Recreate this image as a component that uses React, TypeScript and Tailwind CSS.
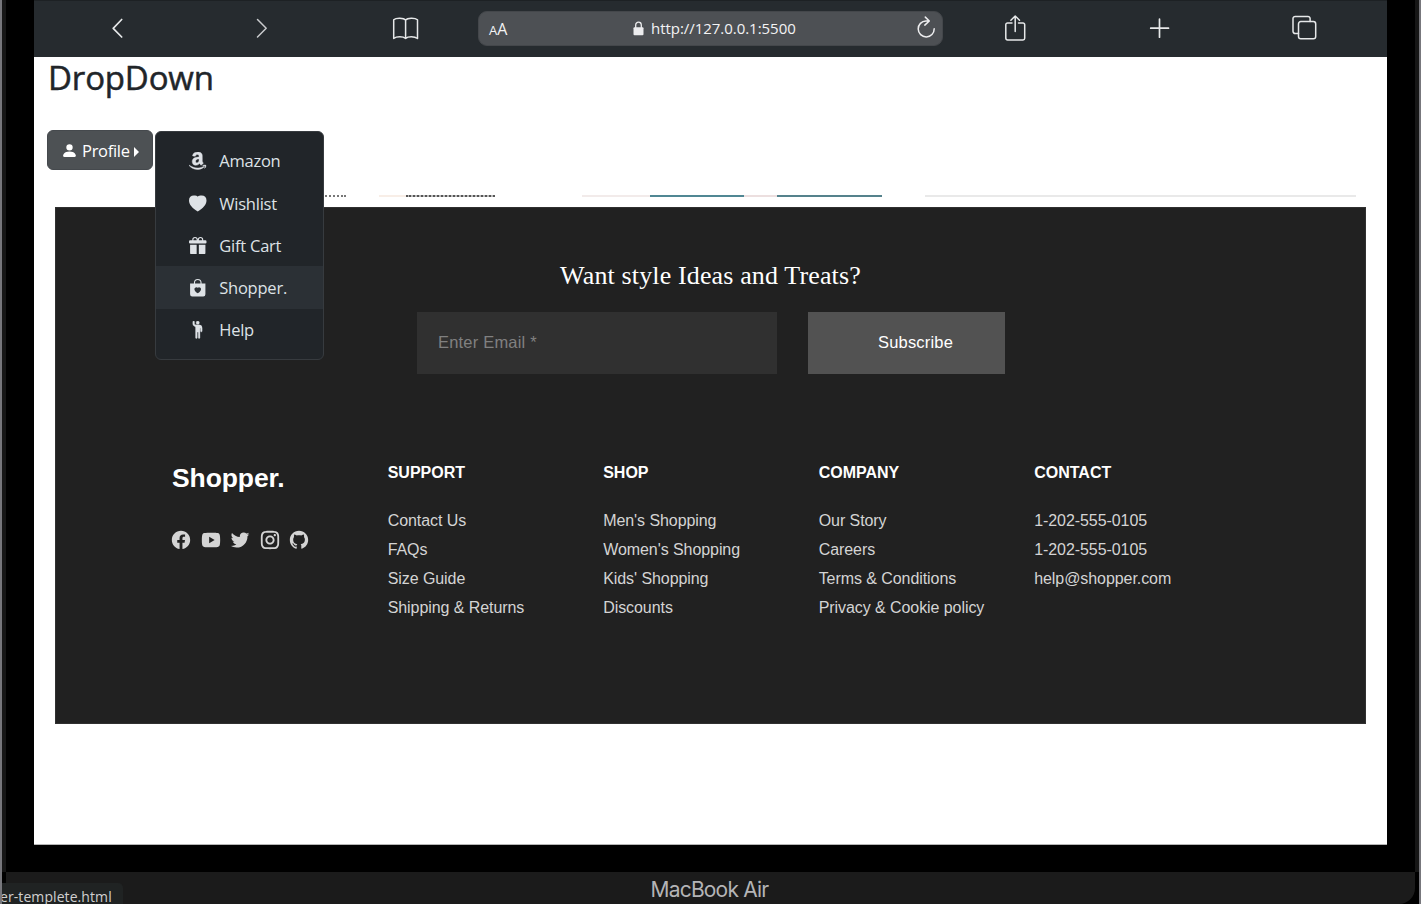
import React from "react";
import {
  BsPersonFill,
  BsAmazon,
  BsGiftFill,
  BsBagHeartFill,
  BsPersonRaisedHand,
} from "react-icons/bs";
import {
  RiFacebookCircleFill,
  RiYoutubeFill,
  RiTwitterFill,
  RiInstagramLine,
  RiGithubFill,
} from "react-icons/ri";

function Heart({ className }: { className?: string }) {
  return (
    <svg viewBox="0 0 18 18" className={className} fill="currentColor">
      <path d="M9 17C3.500 13.400 0 10.200 0 5.700C0 2.400 2 .6 5 .6C6.900 .6 8.300 1 9 1.700C9.700 1 11.100 .6 13 .6C16 .6 18 2.400 18 5.700C18 10.200 14.500 13.400 9 17Z" />
    </svg>
  );
}

const menu = [
  { label: "Amazon", Icon: BsAmazon, iconClass: "stroke-current [stroke-width:0.4px]" },
  { label: "Wishlist", Icon: Heart, iconClass: "" },
  { label: "Gift Cart", Icon: BsGiftFill, iconClass: "" },
  { label: "Shopper.", Icon: BsBagHeartFill, iconClass: "", active: true },
  { label: "Help", Icon: BsPersonRaisedHand, iconClass: "stroke-current [stroke-width:0.3px]" },
];

const columns = [
  { title: "SUPPORT", items: ["Contact Us", "FAQs", "Size Guide", "Shipping & Returns"] },
  { title: "SHOP", items: ["Men's Shopping", "Women's Shopping", "Kids' Shopping", "Discounts"] },
  { title: "COMPANY", items: ["Our Story", "Careers", "Terms & Conditions", "Privacy & Cookie policy"] },
  { title: "CONTACT", items: ["1-202-555-0105", "1-202-555-0105", "help@shopper.com"] },
];

const socials = [RiFacebookCircleFill, RiYoutubeFill, RiTwitterFill, RiInstagramLine, RiGithubFill];

function Glyph({ children }: { children: React.ReactNode }) {
  return (
    <svg width="28" height="28" viewBox="0 0 28 28" fill="none" stroke="#e6e8e9" strokeWidth="1.5" strokeLinecap="round" strokeLinejoin="round">
      {children}
    </svg>
  );
}

function Toolbar() {
  return (
    <header className="flex h-[57px] shrink-0 items-center border-t border-[#1d2124] bg-[#262b2f] pb-[2px] pl-[69px]">
      <div className="flex w-[144px]">
        <Glyph><path d="M18.700 5.500 10.200 14.300l8.500 8.700" strokeWidth="1.7" /></Glyph>
      </div>
      <div className="flex w-[144px]">
        <Glyph><path d="M10.500 5.500 19.200 14.300 10.500 23" stroke="#c9cbcd" /></Glyph>
      </div>
      <div className="flex w-[87px]">
        <Glyph>
          <path d="M14.600 6C12.600 3.800 5 3.700 2.700 5.800V24.500C5.500 22.300 12 22.300 14.600 24.500C17 22.300 23.500 22.300 26.500 24.500V5.800C24 3.700 16.500 3.800 14.600 6ZM14.600 6V24.500" />
        </Glyph>
      </div>
      <div className="flex h-[35px] w-[465px] items-center rounded-[9px] border border-[#44474b] bg-[#4d5054] pl-[10px] pr-[6px] font-['Open_Sans',sans-serif] text-[#f3f3f4]">
        <div className="flex w-[144px] items-baseline pt-[2px] leading-none">
          <span className="text-[13px]">A</span>
          <span className="text-[16px]">A</span>
        </div>
        <svg width="11" height="15" viewBox="0 0 11 15" className="shrink-0">
          <path d="M2.700 7V4a2.800 2.800 0 0 1 5.600 0v3" fill="none" stroke="#ececee" strokeWidth="1.300" />
          <rect x="0.500" y="6.200" width="10" height="8" rx="1" fill="#ececee" />
        </svg>
        <span className="ml-[7px] whitespace-nowrap text-[15px] tracking-[-0.040px]">http://127.0.0.1:5500</span>
        <svg width="20" height="24" viewBox="0 0 20 24" className="ml-auto" fill="none" stroke="#eeeef0" strokeWidth="1.500" strokeLinecap="round" strokeLinejoin="round">
          <path d="M12.900 4.900H10A8 8 0 1 0 18.200 12.800M9.300 1.100l4 3.900-4.500 4.100" />
        </svg>
      </div>
      <div className="ml-[58px] flex w-[145px]">
        <Glyph>
          <path d="M11 9H6.500a1.700 1.700 0 0 0-1.700 1.700v13.500A1.700 1.700 0 0 0 6.500 25.900h15.500a1.700 1.700 0 0 0 1.700-1.700V10.700A1.700 1.700 0 0 0 22 9h-4.500M14.200 17.500V2.200M9.900 6.200 14.200 2l4.300 4.200" />
        </Glyph>
      </div>
      <div className="flex w-[145px]">
        <Glyph><path d="M13.500 5.200v18M4.700 14.200h17.800" strokeWidth="1.700" /></Glyph>
      </div>
      <div className="flex">
        <Glyph>
          <path d="M7.500 19.500H4.200A2.200 2.200 0 0 1 2 17.300V4.600A2.200 2.200 0 0 1 4.200 2.400h12.700a2.200 2.200 0 0 1 2.200 2.200v3" />
          <rect x="7.500" y="7.600" width="17.200" height="17.200" rx="2.300" />
        </Glyph>
      </div>
    </header>
  );
}

function Menu() {
  return (
    <nav className="absolute left-[121px] top-[74px] w-[169px] rounded-[6px] border border-[#373b3f] bg-[#212529] pb-[8px] pt-[7.500px] font-['Open_Sans',sans-serif] text-[#dee2e6]">
      {menu.map(({ label, Icon, iconClass, active }) => (
        <a key={label} className={`flex h-[42.25px] items-center pl-[33px] text-[16.500px] ${active ? "bg-[#2b3035]" : ""}`}>
          <Icon className={`mt-px size-[17.500px] shrink-0 ${iconClass}`} />
          <span className="ml-[12.700px] whitespace-nowrap pt-[2px] tracking-[-0.220px]">{label}</span>
        </a>
      ))}
    </nav>
  );
}

function Footer() {
  return (
    <footer className="ml-[21px] h-[517px] w-[1311px] border border-[#303030] bg-[#212121] font-['Liberation_Sans',Arial,sans-serif]">
      <h2 className="pt-[52px] text-center font-['Liberation_Serif',serif] text-[26px] leading-[32px] tracking-[0.140px] text-white">
        Want style Ideas and Treats?
      </h2>
      <div className="ml-[361px] mt-[20px] flex gap-[31px]">
        <div className="flex h-[62px] w-[360px] items-center bg-[#303030] pb-[2px] pl-[21px] text-[16.500px] tracking-[0.200px] text-[#808080]">Enter Email *</div>
        <div className="flex h-[62px] w-[197px] items-center bg-[#525252] pb-[2px] pl-[70px] text-[16.500px] tracking-[0.180px] text-white">Subscribe</div>
      </div>
      <div className="ml-[116px] mt-[88px] flex">
        <div className="w-[215.700px]">
          <div className="text-[26.500px] font-bold leading-[32px] tracking-[-0.100px] text-white">Shopper.</div>
          <div className="ml-[-2px] mt-[35px] flex gap-[7.600px] text-[#d4d4d4]">
            {socials.map((Icon, i) => (
              <Icon key={i} className="size-[22px]" />
            ))}
          </div>
        </div>
        {columns.map((c) => (
          <div key={c.title} className="w-[215.500px] whitespace-nowrap">
            <h3 className="pt-px text-[16px] font-bold leading-[20px] text-white">{c.title}</h3>
            <ul className="mt-[23px] text-[16px] leading-[29px] tracking-[-0.070px] text-[#d4d4d4]">
              {c.items.map((t, i) => (
                <li key={i}>{t}</li>
              ))}
            </ul>
          </div>
        ))}
      </div>
    </footer>
  );
}

export default function App() {
  return (
    <div className="relative flex h-[904px] w-[1421px] flex-col overflow-hidden border-l-2 border-r-2 border-[#77777c] bg-black">
      <div className="flex h-[872px] shrink-0 border-x-4 border-[#161616] bg-black pl-[28px]">
        <div className="flex h-[845px] w-[1353px] flex-col border-b border-[#b5b5b5] bg-white">
          <Toolbar />
          <main className="relative">
            <h1 className="h-[73px] pl-[14px] font-['Open_Sans',sans-serif] text-[33px] font-medium leading-[42px] tracking-[-0.150px] text-[#212529] [-webkit-text-stroke:0.5px_#212529]">DropDown</h1>
            <button className="ml-[13px] flex h-[40px] w-[106px] items-center rounded-[6px] border border-[#45494d] bg-[#4d5154] pl-[13px] font-['Open_Sans',sans-serif] text-[16.500px] tracking-[-0.300px] text-white">
              <BsPersonFill className="size-[17px]" />
              <span className="ml-[4px] pt-[2px]">Profile</span>
              <span className="ml-[4px] mt-[3px] border-y-[5px] border-l-[5px] border-y-transparent border-l-white" />
            </button>
            <div className="mb-[10px] mt-[25px] flex h-[2px] pl-[288px]">
              <span className="w-[24px] border-t-2 border-dotted border-[#777777]" />
              <span className="ml-[33px] w-[27px] bg-[#f8eee7]" />
              <span className="w-[89px] border-t-2 border-dotted border-[#555555] bg-[#bbbbbb]" />
              <span className="ml-[87px] w-[68px] bg-[#f2ebea]" />
              <span className="w-[94px] bg-[#508793]" />
              <span className="w-[33px] bg-[#ecdfdf]" />
              <span className="w-[105px] bg-[#55828c]" />
              <span className="ml-[43px] w-[431px] bg-[#e9e9e9]" />
            </div>
            <Footer />
            <Menu />
          </main>
        </div>
      </div>
      <div className="mx-1 flex h-[32px] items-center justify-center rounded-b-[16px] bg-[#1b1b1b] pr-[2px] pt-[3px] font-['Inter',sans-serif] text-[21px] text-[#b4b4b6]">
        <span className="tracking-[-0.800px]">MacBook Air</span>
      </div>
      <div className="absolute -left-0.5 bottom-0 flex h-[21px] w-[123px] items-end whitespace-nowrap rounded-tr-[5px] bg-[#202323] font-['Open_Sans',sans-serif] text-[14px] leading-[15px] tracking-[0.080px] text-[#d0d0d0]">er-templete.html</div>
    </div>
  );
}
